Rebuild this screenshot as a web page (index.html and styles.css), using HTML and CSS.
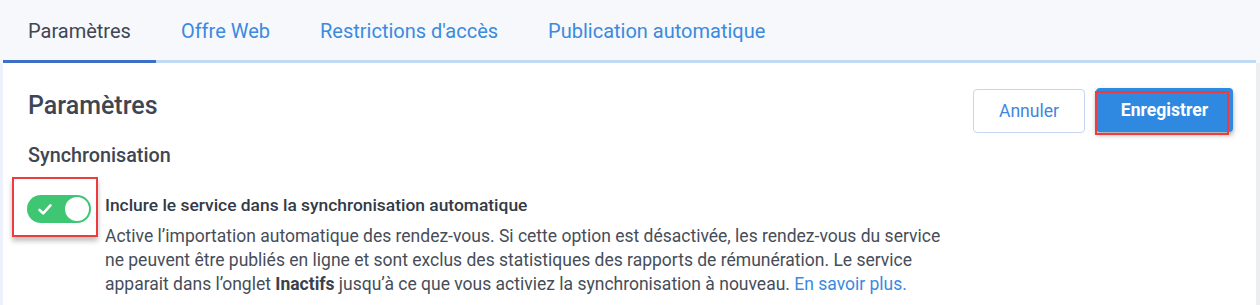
FILE: index.html
```html
<!DOCTYPE html>
<html lang="fr">
<head>
<meta charset="utf-8">
<link rel="stylesheet" href="styles.css">
</head>
<body>
<div class="page">
  <nav class="tabbar">
    <div class="tab active">Paramètres</div>
    <div class="tab">Offre Web</div>
    <div class="tab">Restrictions d'accès</div>
    <div class="tab">Publication automatique</div>
    <div class="tab-fill"></div>
    <div class="tab-fill shifted"></div>
  </nav>
  <main class="card">
    <div class="card-head">
      <h1 class="title">Paramètres</h1>
      <div class="actions">
        <button class="btn btn-outline">Annuler</button>
        <button class="btn btn-primary">Enregistrer<span class="highlight"></span></button>
      </div>
    </div>
    <h2 class="subtitle">Synchronisation</h2>
    <div class="setting">
      <div class="toggle-wrap">
        <span class="toggle">
          <svg class="check" width="14" height="13" viewBox="0 0 14 13"><path d="M1.6 7 L5.2 10.4 L12.4 2.4" fill="none" stroke="#fff" stroke-width="2.6" stroke-linecap="round" stroke-linejoin="round"/></svg>
          <span class="knob"></span>
        </span>
        <span class="highlight"></span>
      </div>
      <div class="setting-text">
        <div class="setting-label">Inclure le service dans la synchronisation automatique</div>
        <p class="setting-desc">Active l’importation automatique des rendez-vous. Si cette option est désactivée, les rendez-vous du service ne peuvent être publiés en ligne et sont exclus des statistiques des rapports de rémunération. Le service apparait dans l’onglet <b>Inactifs</b> jusqu’à ce que vous activiez la synchronisation à nouveau. <a class="link" href="#">En savoir plus.</a></p>
      </div>
    </div>
  </main>
</div>
</body>
</html>
```
FILE: styles.css
```css
* { box-sizing: border-box; }
html, body { margin: 0; padding: 0; }
body {
  background: #f6f8fc;
  font-family: Roboto, "Liberation Sans", Arial, sans-serif;
  color: #3f4653;
  width: 1260px;
  height: 305px;
  overflow: hidden;
}
.page {
  display: flex;
  flex-direction: column;
  height: 305px;
  background: linear-gradient(to right, #edf1fb 0 3px, transparent 3px, transparent 1256px, #eceef2 1256px);
}
.tabbar {
  display: flex;
  align-items: flex-end;
  padding-left: 3px;
  padding-right: 4px;
  background: #f6f8fc;
  height: 63px;
}
.tab {
  height: 62px;
  padding: 0 25px;
  font-size: 20px;
  line-height: 60px;
  color: #3a8ae0;
  border-bottom: 3px solid #bfdbf4;
  white-space: nowrap;
}
.tab.active {
  color: #3f4653;
  border-bottom-color: #3d6fc6;
}
.tab-fill {
  flex: 0 0 194px;
  height: 62px;
  border-bottom: 3px solid #bfdbf4;
}
.tab-fill.shifted {
  flex: 1;
  height: 63px;
  background: #f7f8fc;
}
.card {
  flex: 1;
  background: #fff;
  margin: 0 4px 0 3px;
  padding: 26px 23px 0 25px;
}
.card-head {
  display: flex;
  justify-content: space-between;
  align-items: flex-start;
}
.title {
  margin: 2px 0 0;
  font-size: 25px;
  font-weight: 500;
  line-height: 30px;
  color: #3f4653;
}
.actions {
  display: flex;
  gap: 11px;
}
.btn {
  font-family: inherit;
  font-size: 17.6px;
  height: 44px;
  border-radius: 4px;
  cursor: pointer;
  position: relative;
}
.btn-outline {
  width: 112px;
  background: #fff;
  color: #3f86e0;
  border: 1px solid #c6d6f2;
}
.btn-primary {
  width: 137px;
  margin-top: -1px;
  background: #2f89e0;
  color: #fff;
  font-weight: 700;
  border: none;
  box-shadow: 0 3px 5px rgba(0,0,0,0.35);
}
.btn-primary .highlight {
  position: absolute;
  left: -1px;
  top: 3px;
  right: 4px;
  bottom: -3px;
  border: 2px solid #ee3b3d;
}
.subtitle {
  margin: 10px 0 0;
  font-size: 19.8px;
  font-weight: 500;
  line-height: 26px;
  color: #3f4653;
}
.setting {
  display: flex;
  margin-top: 8px;
}
.toggle-wrap {
  position: relative;
  flex: 0 0 80px;
  height: 60px;
  margin-left: -16px;
}
.toggle-wrap .highlight {
  position: absolute;
  left: 0;
  top: 0;
  width: 86px;
  height: 60px;
  border: 2px solid #ee3b3d;
  box-shadow: 0 4px 5px rgba(0,0,0,0.25);
}
.toggle {
  position: absolute;
  left: 15px;
  top: 18px;
  width: 64px;
  height: 28px;
  border-radius: 14px;
  background: #3fc673;
  display: flex;
  align-items: center;
  justify-content: space-between;
  padding: 0 2px 0 11px;
}
.check { display: block; }
.knob {
  width: 24px;
  height: 24px;
  border-radius: 50%;
  background: #fff;
}
.setting-text {
  margin-left: 13px;
  padding-top: 17px;
  width: 848px;
}
.setting-label {
  font-size: 17.4px;
  font-weight: 500;
  line-height: 22px;
  color: #333a46;
}
.setting-desc {
  margin: 8px 0 0;
  font-size: 17.5px;
  line-height: 24px;
  color: #464d59;
}
.setting-desc b { font-weight: 700; color: #3a414d; }
.link { color: #3a8ae0; text-decoration: none; }
```
